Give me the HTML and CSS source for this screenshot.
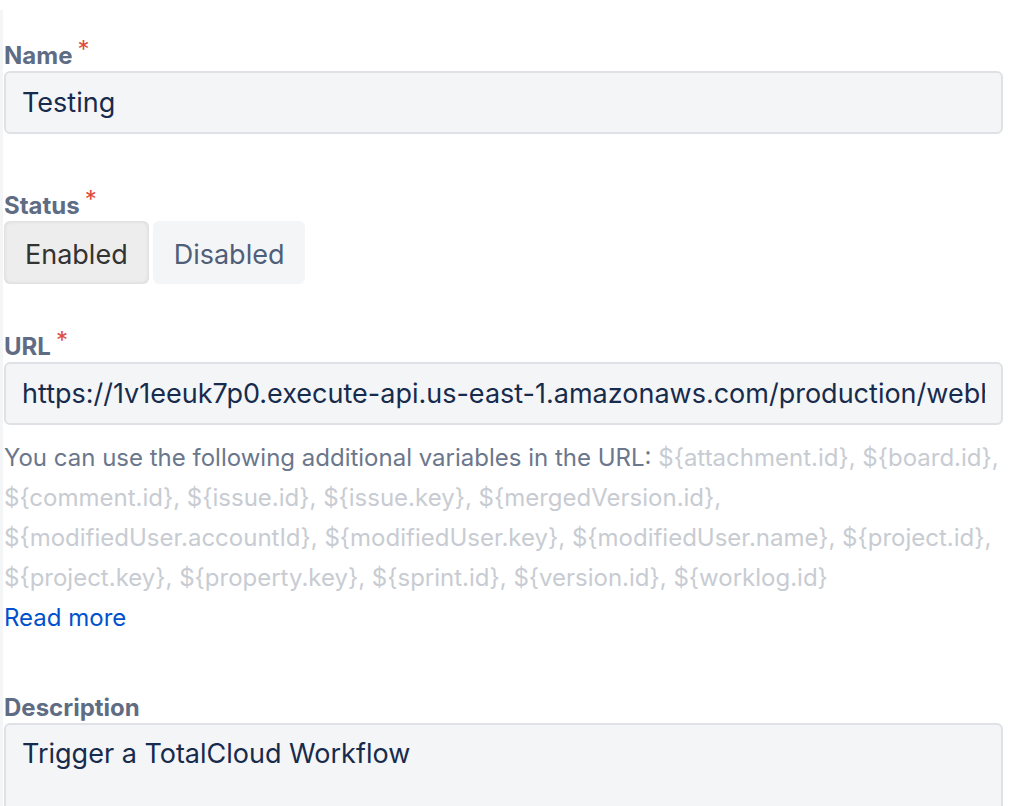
FILE: index.html
```html
<!DOCTYPE html>
<html>
<head>
  <title>Edit webhook</title>
  <link rel="stylesheet" href="styles.css">
</head>
<body>
  <div class="panel">
    <div class="field">
      <label class="label" for="name">Name<span class="req">*</span></label>
      <input class="text-input" type="text" id="name" value="Testing">
    </div>

    <div class="field field-status">
      <label class="label">Status<span class="req">*</span></label>
      <div class="toggle">
        <button class="toggle-btn selected">Enabled</button>
        <button class="toggle-btn">Disabled</button>
      </div>
    </div>

    <div class="field field-url">
      <label class="label" for="url">URL<span class="req">*</span></label>
      <input class="text-input" type="text" id="url" value="https://1v1eeuk7p0.execute-api.us-east-1.amazonaws.com/production/webhook">
      <div class="help">
        You can use the following additional variables in the URL:
        <span class="vars">${attachment.id}, ${board.id}, ${comment.id}, ${issue.id}, ${issue.key}, ${mergedVersion.id}, ${modifiedUser.accountId}, ${modifiedUser.key}, ${modifiedUser.name}, ${project.id}, ${project.key}, ${property.key}, ${sprint.id}, ${version.id}, ${worklog.id}</span>
        <br>
        <a class="more" href="#">Read more</a>
      </div>
    </div>

    <div class="field field-desc">
      <label class="label" for="desc">Description</label>
      <textarea class="text-input textarea" id="desc">Trigger a TotalCloud Workflow</textarea>
    </div>
  </div>
</body>
</html>
```

FILE: styles.css
```css
body {
  margin: 0;
  padding: 0;
  background-color: #fff;
  font-family: Inter, "Liberation Sans", Arial, sans-serif;
  overflow: hidden;
}

.panel {
  margin-top: 10px;
  padding: 30px 7px 0 1px;
  border-left: 3px solid #f4f5f7;
}

.field {
  display: flex;
  flex-direction: column;
}

.label {
  display: block;
  font-size: 24px;
  line-height: 31px;
  font-weight: 700;
  color: #5e6c84;
}

.req {
  color: #e04b3a;
  font-size: 24px;
  font-weight: normal;
  margin-left: 5px;
  vertical-align: 6px;
  line-height: 0;
}

.text-input {
  box-sizing: border-box;
  width: 100%;
  height: 63px;
  margin: 0;
  padding: 0 16px;
  border: 2px solid #dfe1e6;
  border-radius: 6px;
  background-color: #f4f5f7;
  font-family: Inter, "Liberation Sans", Arial, sans-serif;
  font-size: 27px;
  color: #172b4d;
  outline: none;
}

.textarea {
  height: 130px;
  padding: 12px 16px;
  line-height: 34px;
  resize: none;
}

.field-status {
  margin-top: 56px;
}

.toggle {
  display: flex;
  gap: 4px;
}

.toggle-btn {
  height: 63px;
  padding: 4px 21px 0;
  border: none;
  border-radius: 6px;
  background-color: #f4f5f7;
  font-family: Inter, "Liberation Sans", Arial, sans-serif;
  font-size: 27px;
  color: #505f79;
  cursor: pointer;
}

.toggle-btn.selected {
  background-color: #ededed;
  color: #333;
  box-shadow: inset 0 0 4px rgba(0, 0, 0, 0.12);
}

.field-url {
  margin-top: 47px;
}

.help {
  margin-top: 13px;
  font-size: 24px;
  line-height: 40px;
  color: #6b778c;
}

.vars {
  color: #c8ccd2;
}

.more {
  color: #0052cc;
  text-decoration: none;
}

.field-desc {
  margin-top: 54px;
}
```
